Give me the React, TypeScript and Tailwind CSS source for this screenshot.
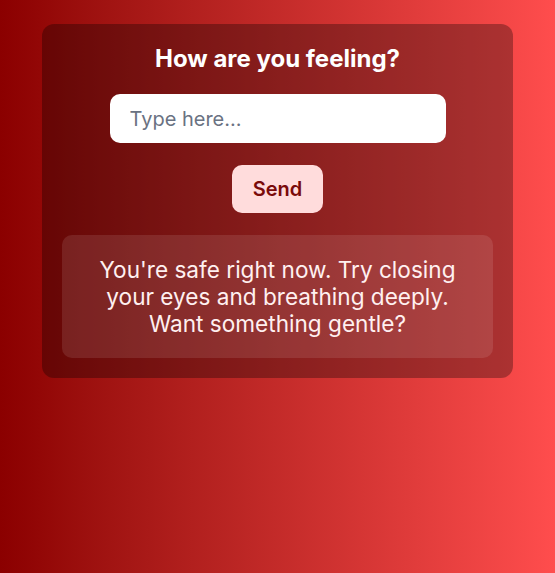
export default function App() {
  return (
    <div
      className="min-h-[573px] w-full bg-gradient-to-r from-[#8b0000] to-[#ff4d4d] pt-6"
      style={{ fontFamily: "Inter, 'Noto Sans', sans-serif" }}
    >
      <div className="mx-auto flex w-[471px] flex-col items-center rounded-xl bg-black/30 p-5">
        <h2 className="text-[24px] font-bold leading-[30px] text-white">How are you feeling?</h2>

        <input
          type="text"
          placeholder="Type here..."
          className="mt-5 h-[49px] w-[336px] rounded-[10px] bg-white px-5 text-[20px] text-gray-800 placeholder:text-gray-500 outline-none"
        />

        <button className="mt-[22px] h-[48px] w-[91px] rounded-[10px] bg-[#ffdcdc] text-[20px] font-semibold text-[#7a0a0a]">
          Send
        </button>

        <div className="mt-[22px] w-full rounded-[10px] bg-white/10 px-4 py-[21px] text-center text-[22.6px] leading-[27px] text-[#fff0f0]">
          You're safe right now. Try closing your eyes and breathing deeply. Want something gentle?
        </div>
      </div>
    </div>
  )
}
